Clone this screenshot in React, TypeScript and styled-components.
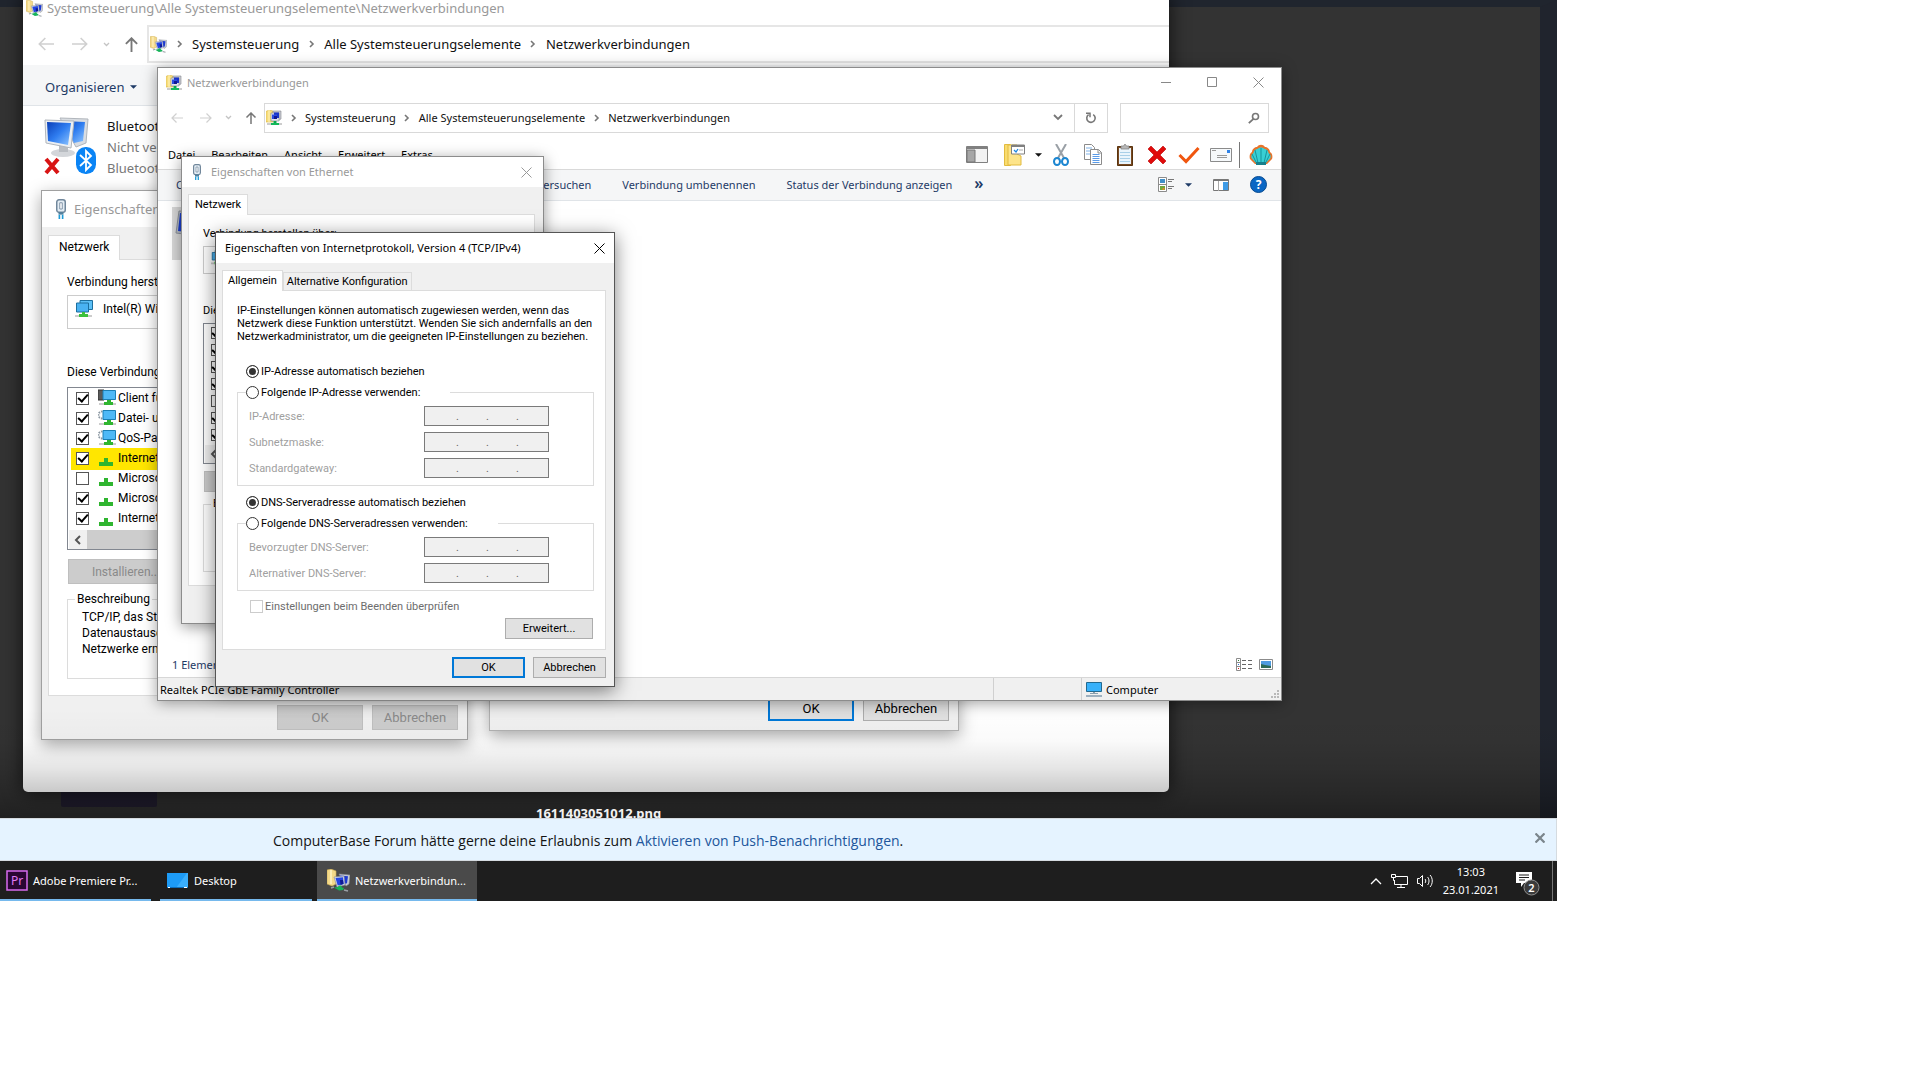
import React from "react";
import styled, { createGlobalStyle, css, ThemeProvider } from "styled-components";

const ui = `"Noto Sans", "Open Sans", sans-serif`;
const dlg = `Roboto, "Noto Sans", sans-serif`;

const Global = createGlobalStyle`
  * { box-sizing: border-box; }
  body { margin: 0; background: #fff; font-family: ${ui}; font-size: 11px; color: #000; }
  button, input { font: inherit; color: inherit; }
  button { padding: 0; border: 0; background: none; }
  p { margin: 0; }
  svg { display: block; flex: none; }
`;

/* ---------- shell ---------- */
const Screen = styled.main`
  display: flex;
  flex-direction: column;
  width: 100%;
  max-width: 1557px;
  overflow: hidden;
`;
const Desktop = styled.section`
  position: relative;
  height: 818px;
  overflow: hidden;
  background: #333;
`;
const Backdrop = styled.div`
  position: absolute;
  inset: 0;
  border-top: 7px solid #20252e;
  border-right: 17px solid #20242d;
`;
const Shade = styled.div`
  position: absolute;
  inset: auto 0 0 0;
  height: 110px;
  background: linear-gradient(rgba(0, 0, 0, 0), rgba(0, 0, 0, 0.02) 30%, rgba(0, 0, 0, 0.1) 55%, rgba(0, 0, 0, 0.22) 78%, rgba(0, 0, 0, 0.36));
`;
const Thumb = styled.div`
  position: absolute;
  left: 61px;
  top: 780px;
  width: 96px;
  height: 27px;
  border-radius: 2px;
  background: #242033;
`;
const FileName = styled.p`
  position: absolute;
  left: 536px;
  top: 803px;
  font: 700 13px/20px ${ui};
  color: #f2f2f2;
`;
const Win = styled.section<{ $x: number; $y: number; $w: number; $h: number; $edge: string; $shadow: string; $bg?: string }>`
  position: absolute;
  left: ${(p) => p.$x}px;
  top: ${(p) => p.$y}px;
  width: ${(p) => p.$w}px;
  height: ${(p) => p.$h}px;
  display: flex;
  flex-direction: column;
  border: 1px solid ${(p) => p.$edge};
  background: ${(p) => p.$bg || "#fff"};
  box-shadow: ${(p) => p.$shadow};
  white-space: nowrap;
`;
const PhotoWin = styled(Win)`
  border: 0;
  border-radius: 0 0 5px 5px;
  overflow: hidden;
`;

/* ---------- explorer ---------- */
const TitleRow = styled.header<{ $h: number; $px?: number; $gap?: number; $size?: number; $color?: string }>`
  display: flex;
  align-items: center;
  flex: none;
  gap: ${(p) => p.$gap ?? 5}px;
  height: ${(p) => p.$h}px;
  padding: 0 ${(p) => p.$px ?? 7}px;
  background: #fff;
  color: ${(p) => p.$color || "#999"};
  font-size: ${(p) => p.$size || 11}px;
`;
const Caption = styled.h2`
  flex: 1;
  margin: 0;
  padding-bottom: 1px;
  font: inherit;
  font-weight: 400;
`;
const CaptionButtons = styled.div`
  display: flex;
  gap: 35px;
  padding-right: 9px;
`;
const NavRow = styled.nav<{ $h: number }>`
  display: flex;
  align-items: center;
  flex: none;
  height: ${(p) => p.$h}px;
`;
const Arrows = styled.div<{ $w: number; $l: number; $r: number }>`
  display: flex;
  align-items: center;
  justify-content: space-between;
  width: ${(p) => p.$w}px;
  padding: 0 ${(p) => p.$r}px 0 ${(p) => p.$l}px;
  & > :nth-child(2) { margin-left: 4px; }
`;
const Address = styled.div<{ $h: number; $size: number; $open?: boolean }>`
  display: flex;
  align-items: center;
  flex: 1;
  height: ${(p) => p.$h}px;
  padding-left: 1px;
  border: 1px solid #d9d9d9;
  ${(p) => p.$open && css`border-right: 0; border-width: 2px 0 2px 2px; border-color: #e6e6e6;`}
  font-size: ${(p) => p.$size}px;
`;
const Sep = styled.span<{ $w: number }>`
  display: flex;
  justify-content: center;
  width: ${(p) => p.$w}px;
`;
const Crumb = styled.a`
  color: #111;
  text-decoration: none;
`;
const AddressEnd = styled.div`
  display: flex;
  align-self: stretch;
  align-items: center;
  margin-left: auto;
`;
const IconCell = styled.button<{ $w: number; $line?: boolean }>`
  display: flex;
  align-items: center;
  justify-content: center;
  align-self: stretch;
  width: ${(p) => p.$w}px;
  ${(p) => p.$line && css`border-left: 1px solid #d9d9d9;`}
`;
const Search = styled.label`
  display: flex;
  align-items: center;
  width: 149px;
  height: 30px;
  margin: 0 12px;
  padding-right: 8px;
  border: 1px solid #d9d9d9;
`;
const SearchInput = styled.input`
  flex: 1;
  min-width: 0;
  border: 0;
  outline: 0;
  background: none;
`;
const MenuRow = styled.div`
  display: flex;
  align-items: center;
  flex: none;
  height: 31px;
  padding: 2px 8px 0 10px;
`;
const Menus = styled.div`
  display: flex;
  flex: 1;
  gap: 16px;
`;
const Tools = styled.div`
  display: flex;
  align-items: center;
`;
const ToolCell = styled.button`
  display: grid;
  place-items: center;
  width: 32px;
  height: 26px;
`;
const Divider = styled.span`
  width: 1px;
  height: 26px;
  margin: 0 9px 0 2px;
  background: #777;
`;
const CommandBar = styled.div<{ $h: number; $size?: number }>`
  display: flex;
  align-items: center;
  flex: none;
  gap: 31px;
  height: ${(p) => p.$h}px;
  padding: 3px 14px 0 22px;
  border-bottom: 1px solid #e0e4e8;
  background: #f5f6f7;
  color: #1e3a66;
  font-size: ${(p) => p.$size || 11}px;
`;
const MainCommands = styled(CommandBar)`
  border-top: 1px solid #d9d9d9;
  padding: 0 14px 1px 18px;
`;
const More = styled.button`
  margin: -4px 0 0 -9px;
  font-size: 16px;
  font-weight: 600;
`;
const CommandEnd = styled.div`
  display: flex;
  align-items: center;
  gap: 21px;
  margin-left: auto;
`;
const CaretButton = styled.button<{ $gap?: number }>`
  display: flex;
  align-items: center;
  gap: ${(p) => p.$gap ?? 7}px;
`;
const FolderButton = styled(CaretButton)`
  margin: 0 3px 0 16px;
`;
const Files = styled.div`
  flex: 1;
  padding: 6px 14px;
`;
const SelectedTile = styled.div`
  display: flex;
  width: 260px;
  height: 53px;
  padding: 2px;
  background: #d9d9d9;
`;
const Details = styled.div`
  display: flex;
  align-items: center;
  flex: none;
  gap: 7px;
  height: 24px;
  padding: 0 8px 2px 14px;
  color: #1e3a66;
`;
const Count = styled.span`
  flex: 1;
`;
const StatusBar = styled.footer`
  display: flex;
  flex: none;
  height: 23px;
  border-top: 1px solid #d7d7d7;
  background: #f0f0f0;
`;
const StatusCell = styled.span<{ $w?: number }>`
  display: flex;
  align-items: center;
  gap: 4px;
  ${(p) => (p.$w ? css`width: ${p.$w}px; border-left: 1px solid #d0d0d0;` : css`flex: 1;`)}
  padding: 0 2px 0 ${(p) => (p.$w ? 4 : 2)}px;
`;
const Grip = styled.span`
  display: flex;
  align-self: flex-end;
  margin: 0 0 2px auto;
`;
const Connection = styled.article`
  display: flex;
  gap: 9px;
  padding: 9px 21px;
`;
const ConnIcon = styled.span`
  padding-top: 2px;
`;
const ConnText = styled.p`
  padding-top: 1px;
  font-size: 13px;
  line-height: 21px;
  color: #777;
`;
const ConnName = styled.strong`
  display: block;
  font-weight: 400;
  color: #111;
`;

/* ---------- dialogs ---------- */
const DialogBody = styled.div<{ $pt?: number }>`
  display: flex;
  flex-direction: column;
  flex: 1;
  padding: ${(p) => p.$pt ?? 7}px 8px 0 6px;
  background: #f0f0f0;
  font-family: ${dlg};
`;
const Tabs = styled.div<{ $h: number }>`
  display: flex;
  align-items: flex-end;
  height: ${(p) => p.$h}px;
`;
const Tab = styled.button<{ $on?: boolean; $px: number; $h: number; $size?: number }>`
  height: ${(p) => p.$h}px;
  padding: 0 ${(p) => p.$px}px;
  border: 1px solid #dcdcdc;
  border-bottom: 0;
  background: #f0f0f0;
  font-size: ${(p) => p.$size ?? 11}px;
  ${(p) => p.$on && css`
    position: relative;
    z-index: 1;
    margin-bottom: -1px;
    padding-bottom: 2px;
    background: #fff;
  `}
`;
const Panel = styled.div<{ $pad: string }>`
  display: flex;
  flex-direction: column;
  padding: ${(p) => p.$pad};
  border: 1px solid #dcdcdc;
  background: #fff;
`;
const Footer = styled.footer<{ $gap: number; $pt: number; $size?: number }>`
  display: flex;
  justify-content: flex-end;
  gap: ${(p) => p.$gap}px;
  padding: ${(p) => p.$pt}px 1px 0 0;
  font-size: ${(p) => p.$size ?? 11}px;
`;
const TightFooter = styled(Footer)`
  padding-right: 0;
`;
const Push = styled.button<{ $w: number; $h: number; $main?: boolean }>`
  width: ${(p) => p.$w}px;
  height: ${(p) => p.$h}px;
  border: ${(p) => (p.$main ? "2px solid #0078d7" : "1px solid #adadad")};
  background: #e1e1e1;
  &:disabled {
    border-color: #bfbfbf;
    background: #ccc;
    color: #8a8a8a;
  }
`;
const Intro = styled.p`
  line-height: 13px;
  white-space: pre-line;
`;
const RadioLabel = styled.label`
  display: flex;
  align-items: center;
  gap: 2px;
  height: 20px;
`;
const SoloRadio = styled(RadioLabel)<{ $mt: number }>`
  margin: ${(p) => p.$mt}px 0 1px 9px;
`;
const Radio = styled.input.attrs({ type: "radio" })`
  appearance: none;
  width: 13px;
  height: 13px;
  margin: 0;
  border: 1px solid #333;
  border-radius: 50%;
  background: #fff;
  &:checked {
    background: #333;
    box-shadow: inset 0 0 0 2px #fff;
  }
`;
const Check = styled.input.attrs({ type: "checkbox" })<{ $s?: number }>`
  appearance: none;
  flex: none;
  display: grid;
  place-items: center;
  width: ${(p) => p.$s ?? 13}px;
  height: ${(p) => p.$s ?? 13}px;
  margin: 0;
  border: 1px solid #555;
  background: #fff;
  &:disabled { border-color: #ccc; }
  &:checked::after {
    content: "";
    width: 4px;
    height: 8px;
    margin-top: -2px;
    border: solid #000;
    border-width: 0 2px 2px 0;
    transform: rotate(42deg);
  }
`;
const IpGroup = styled.fieldset`
  display: grid;
  gap: 6px;
  min-width: 0;
  margin: 0;
  padding: 4px 11px 7px;
  border: 1px solid #dcdcdc;
`;
const IpLegend = styled.legend<{ $w: number }>`
  width: ${(p) => p.$w}px;
  margin-left: -3px;
  padding: 0;
`;
const IpRow = styled.div`
  display: grid;
  grid-template-columns: 175px 125px;
  align-items: center;
  height: 20px;
  color: #a0a0a0;
`;
const IpBox = styled.span`
  display: flex;
  align-items: center;
  height: 20px;
  padding: 0 2px 0 4px;
  border: 1px solid #7a7a7a;
  background: #f0f0f0;
  color: #666;
`;
const Octet = styled.input`
  flex: 1;
  min-width: 0;
  width: 0;
  height: 14px;
  padding: 0;
  border: 0;
  background: none;
`;
const Dot = styled.span`
  width: 3px;
`;
const Verify = styled.label`
  display: flex;
  align-items: center;
  gap: 2px;
  height: 16px;
  margin: 7px 0 4px 13px;
  color: #6d6d6d;
`;
const Advanced = styled(Push)`
  align-self: flex-end;
  margin-right: 1px;
`;

/* properties dialog: every measure comes from the theme so that both sizes share one layout */
type Metrics = {
  font: number; line: number; titleFont: number; title: number; titlePad: number; titleGap: number; plug: number; bodyTop: number; tab: number;
  tabPx: number; panelH: number; panelTop: number; panelSide: number; adapter: number; gap: number; listTop: number; row: number;
  rowPad: number; check: number; icon: number; scroll: number; btnTop: number; btnW: number; btnH: number; groupTop: number; groupH: number;
};
const small: Metrics = {
  font: 11, line: 16, titleFont: 11, title: 30, titlePad: 11, titleGap: 10, plug: 8, bodyTop: 7, tab: 20, tabPx: 6, panelH: 372, panelTop: 11,
  panelSide: 14, adapter: 28, gap: 29, listTop: 4, row: 17, rowPad: 7, check: 12, icon: 15, scroll: 18, btnTop: 7, btnW: 98, btnH: 21,
  groupTop: 4, groupH: 76,
};
const large: Metrics = {
  font: 12, line: 18, titleFont: 13, title: 36, titlePad: 14, titleGap: 8, plug: 10, bodyTop: 8, tab: 24, tabPx: 10, panelH: 437, panelTop: 13,
  panelSide: 18, adapter: 34, gap: 34, listTop: 6, row: 20, rowPad: 8, check: 13, icon: 18, scroll: 19, btnTop: 9, btnW: 116, btnH: 25,
  groupTop: 6, groupH: 89,
};
const m = (k: keyof Metrics) => (p: { theme: unknown }) => `${(p.theme as Metrics)[k]}px`;

const PropPanel = styled(Panel)`
  height: ${m("panelH")};
  font-size: ${m("font")};
`;
const Label = styled.p`
  line-height: ${m("line")};
`;
const Adapter = styled.div`
  display: flex;
  align-items: center;
  gap: 10px;
  height: ${m("adapter")};
  margin: 4px 0 ${m("gap")};
  padding: 0 7px 6px;
  border: 1px solid #ccc;
`;
const List = styled.div`
  margin-top: ${m("listTop")};
  border: 1px solid #828790;
`;
const Item = styled.label<{ $hot?: boolean }>`
  display: flex;
  align-items: center;
  gap: 2px;
  height: ${m("row")};
  padding-left: ${m("rowPad")};
  ${(p) => p.$hot && css`
    margin-left: 3px;
    padding-left: 5px;
    background: #ffe600;
    box-shadow: 0 2px #ffe600;
  `}
`;
const ItemIcon = styled.span`
  display: flex;
  padding-left: 7px;
`;
const Scroll = styled.div`
  display: flex;
  align-items: center;
  gap: 6px;
  height: ${m("scroll")};
  margin: 2px 1px 0;
  padding-left: 5px;
  background: #f0f0f0;
  color: #555;
`;
const ScrollThumb = styled.span`
  align-self: stretch;
  flex: 1;
  margin-right: 60px;
  background: #cdcdcd;
`;
const Install = styled(Push)`
  flex: none;
  margin: ${m("btnTop")} 0 ${m("groupTop")} 1px;
`;
const Describe = styled.fieldset`
  height: ${m("groupH")};
  min-width: 0;
  margin: 0;
  padding: 1px 14px;
  border: 1px solid #dcdcdc;
  line-height: 16px;
  white-space: pre;
`;
const DescribeLegend = styled.legend`
  margin-left: -7px;
  padding: 0 2px;
  line-height: ${m("line")};
`;

/* ---------- push notice + taskbar ---------- */
const Notice = styled.aside`
  display: flex;
  align-items: center;
  height: 43px;
  padding: 1px 11px 0 273px;
  border: 1px solid #d5dbe0;
  border-left: 0;
  background: #e5f3ff;
  font-family: "Open Sans", "Noto Sans", sans-serif;
  font-size: 14px;
  color: #141414;
`;
const NoticeText = styled.p`
  flex: 1;
`;
const NoticeLink = styled.a`
  color: #21569c;
  text-decoration: none;
`;
const NoticeClose = styled.button`
  display: flex;
  padding-bottom: 4px;
`;
const Taskbar = styled.footer`
  display: flex;
  height: 40px;
  background: #1e1e1e;
  color: #fff;
  font-size: 11px;
`;
const Task = styled.button<{ $w: number; $l: number; $mr: number; $on?: boolean; $gap?: number }>`
  display: flex;
  align-items: center;
  gap: ${(p) => p.$gap ?? 6}px;
  width: ${(p) => p.$w}px;
  margin-right: ${(p) => p.$mr}px;
  padding: 0 0 0 ${(p) => p.$l}px;
  border-bottom: 2px solid #76b9ed;
  background: ${(p) => (p.$on ? "#4a4a4a" : "none")};
  white-space: nowrap;
`;
const Tray = styled.div`
  display: flex;
  align-items: center;
  gap: 9px;
  margin-left: auto;
`;
const Clock = styled.time`
  line-height: 18px;
  text-align: center;
  font-size: 11px;
`;
const Bell = styled.button`
  display: flex;
  margin: 4px 11px 0 7px;
`;
const Peek = styled.span`
  align-self: stretch;
  width: 5px;
  margin-left: -9px;
  border-left: 1px solid #777;
`;

/* ---------- drawings ---------- */
const Stroke = ({ d, w, h, c = "#808080", sw = 1.2 }: { d: string; w: number; h: number; c?: string; sw?: number }) => (
  <svg width={w} height={h} viewBox={`0 0 ${w} ${h}`} fill="none" stroke={c} strokeWidth={sw}><path d={d} /></svg>
);
const Back = ({ s = 12 }) => (<svg width={s} height={s} viewBox="0 0 12 12" fill="none" stroke="#d0d0d0" strokeWidth="1.2"><path d="M12 6H1M5.5 1.5 1 6l4.500 4.500" /></svg>);
const Forward = ({ s = 12 }) => (<svg width={s} height={s} viewBox="0 0 12 12" fill="none" stroke="#d0d0d0" strokeWidth="1.2"><path d="M0 6h11M6.500 1.500 11 6 6.500 10.500" /></svg>);
const Up = ({ s = 12, c = "#777" }) => (<svg width={s} height={s} viewBox="0 0 12 12" fill="none" stroke={c} strokeWidth="1.500"><path d="M6 12V1M1.500 5.500 6 1l4.500 4.500" /></svg>);
const Recent = () => <Stroke w={7} h={5} d="M1 1l2.500 2.500L6 1" c="#c4c4c4" sw={1.3} />;
const Chevron = () => <Stroke w={6} h={8} d="M1 1l3 3-3 3" c="#777" sw={1.6} />;
const ArrowLeft = () => <Stroke w={7} h={10} d="M6 1 2 5l4 4" c="#555" sw={2} />;
const Cross = ({ c = "#999", s = 11, w = 1 }) => (<svg width={s} height={s} viewBox="0 0 11 11" stroke={c} strokeWidth={w}><path d="M.5.5l10 10M10.500.5l-10 10" /></svg>);
const Caret = ({ c = "#1e3a66" }) => (<svg width="7" height="4" viewBox="0 0 8 4"><path d="M0 0h8L4 4z" fill={c} /></svg>);
const NetFolder = ({ s = 16 }) => (
  <svg width={s} height={s} viewBox="0 0 16 16">
    <path d="M0 1.500 3 0l4 1v11H0z" fill="#f7dd7c" stroke="#d6b23e" strokeWidth=".6" />
    <path d="M3 0v12" stroke="#fff3bd" />
    <path d="M7 1h8v8l-2 1H7z" fill="#c9cbd2" stroke="#85878f" strokeWidth=".6" />
    <path d="M5 3h8v8H5z" fill="#dfe2ea" stroke="#85878f" strokeWidth=".6" />
    <path d="M8 2.500h5V8H8z" fill="#1733c9" />
    <path d="M6 4.500h5V9H6z" fill="#2a4be0" /><path d="M8 6h3v3H8z" fill="#10188f" />
    <path d="M7.500 11h3v2h-3z" fill="#0aa64c" /><path d="M5 13h8v2H5z" fill="#13b95a" />
    <path d="M1 14h4M13 14h3" stroke="#9a9a9a" />
  </svg>
);
const NetFolderTilted = ({ s = 17 }) => (
  <svg width={s} height={s} viewBox="0 0 23 23">
    <path d="M0 1l4-1 5 2v13l-4 2-5-2z" fill="#f3d98a" stroke="#c9a94e" strokeWidth=".6" />
    <path d="M4 1v14" stroke="#fff3c4" strokeWidth="1.500" />
    <path d="M12 5l11 1-1 9-3 2z" fill="#c8ccd6" stroke="#868b95" strokeWidth=".6" />
    <path d="M13 6.500l8 .7-1 7-4 1z" fill="#1c39d2" />
    <path d="M7 8l10-1 1 9-8 2z" fill="#d9dde6" stroke="#868b95" strokeWidth=".6" />
    <path d="M8.500 9l7.500-.8.700 6.800-6 1.500z" fill="#2446e4" /><path d="M13 11l3 0 .5 4-3 1z" fill="#0e1a94" />
    <path d="M4 19l3-1M17 21l4 1" stroke="#9aa0a6" strokeWidth="1.500" />
    <path d="M7 18.500l4-.5 1-1.500h2l1 2 2 .5-1 2-4 .5z" fill="#17b35a" />
  </svg>
);
const Plug = ({ s = 8 }) => (
  <svg width={s} height={s * 2} viewBox="0 0 8 16">
    <rect x=".6" y=".6" width="6.800" height="10" rx="1.800" fill="#e4edf4" stroke="#71879b" strokeWidth="1.200" />
    <path d="M3 3h2v5H3z" fill="#fff" stroke="#71879b" strokeWidth=".7" />
    <path d="M2 10.500h4v2H2z" fill="#53809d" /><path d="M2.700 12.500V16M5.300 12.500V16" stroke="#1d9bd7" strokeWidth="1.300" />
  </svg>
);
const NicIcon = ({ s = 18 }) => (
  <svg width={s} height={s} viewBox="0 0 18 18">
    <path d="M5 .5h12.500v9H5z" fill="#5cc0f7" stroke="#1c6f9f" /><path d="M1.500 3h12v9h-12z" fill="#49b2f2" stroke="#1c6f9f" />
    <path d="M7 12h3v2h3v3H4v-3h3z" fill="#3cc13c" /><path d="M0 15h4v2H0zM13 15h4v2h-4z" fill="#ccc" />
  </svg>
);
const ServiceIcon = ({ s = 18, kind }: { s?: number; kind: "client" | "gear" | "proto" }) => (
  <svg width={s} height={s} viewBox="0 0 18 18">
    {kind === "client" && <path d="M0 1h6v10H0z" fill="#5a5a5a" stroke="#333" />}
    {kind === "gear" && <circle cx="4" cy="6" r="3.500" fill="none" stroke="#8b97a1" strokeWidth="2" strokeDasharray="1.500 1" />}
    {kind !== "proto" && <path d="M5 1.500h12.500v9H5z" fill="#4fb9f7" stroke="#1c7fb5" />}
    <path d={kind === "proto" ? "M6 9h4v4h5v4H1v-4h5z" : "M9 11h4v2h2v3H6v-3h3z"} fill="#2fb52f" />
    {kind !== "proto" && <path d="M1 14h5v2H1zM15 14h3v2h-3z" fill="#ccc" />}
  </svg>
);
const BluetoothPcs = () => (
  <svg width="54" height="58" viewBox="0 0 54 58">
    <defs><linearGradient id="scr" x1="0" y1="0" x2="1" y2="1"><stop stopColor="#0b3fb8" /><stop offset=".5" stopColor="#2f7df0" /><stop offset="1" stopColor="#8ec5ff" /></linearGradient></defs>
    <path d="M16 1 44 2 42 26 32 30z" fill="#d9dde2" stroke="#b1b6bc" /><path d="M19 4l22 1-2 19-9 2z" fill="url(#scr)" />
    <ellipse cx="19" cy="36" rx="12" ry="4" fill="#d3d6da" /><path d="M15 27h9v8h-9z" fill="#b9bdc2" />
    <path d="M1 3l29 1-3 27L2 26z" fill="#eceff2" stroke="#b1b6bc" /><path d="M3 5l24 1-3 22L4 24z" fill="url(#scr)" />
    <path d="M2 42l12 14M14 42 2 56" stroke="#d81414" strokeWidth="4" />
    <rect x="32" y="30" width="20" height="27" rx="9.500" fill="#0a84f5" />
    <path d="M36 38l11 10-5 5V34l5 5-11 10" fill="none" stroke="#fff" strokeWidth="1.800" />
  </svg>
);
const TilePc = () => (
  <svg width="40" height="34" viewBox="0 0 40 34">
    <path d="M5 2l31 2-3 24-31-4z" fill="#b9bec6" stroke="#8d939c" />
    <path d="M6 4l27 2-3 19-26-3z" fill="#1c3fd0" />
  </svg>
);
const PaneIcon = () => (
  <svg width="22" height="17" viewBox="0 0 22 17"><path d="M.5.5h21v16H.5z" fill="#f2f2f2" stroke="#808080" /><path d="M1 1h20v2H1z" fill="#808080" /><path d="M1 4h8v12H1z" fill="#a6a6a6" stroke="#777" /></svg>
);
const FolderOpts = () => (
  <svg width="21" height="22" viewBox="0 0 21 22"><path d="M.5.5h6v21h-6z" fill="#f9dc6e" stroke="#e2bb3f" /><path d="M4 1h9v9l4 2v9H4z" fill="#fde48a" stroke="#e2bb3f" /><path d="M7.500 1h13v9h-13z" fill="#fff" stroke="#808080" /><path d="M8 2h12" stroke="#808080" strokeWidth="2" /><path d="M10 6l2 2 2-3" fill="none" stroke="#1c86e0" strokeWidth="1.300" /><path d="M15 6h4" stroke="#aaa" /></svg>
);
const CutIcon = () => (
  <svg width="16" height="22" viewBox="0 0 16 22" fill="none"><path d="M3 0l8 14M13 0 5 14" stroke="#9aa0a6" strokeWidth="2" /><ellipse cx="4" cy="17.500" rx="3" ry="3.500" stroke="#1c86d1" strokeWidth="2" /><ellipse cx="12" cy="17.500" rx="3" ry="3.500" stroke="#1c86d1" strokeWidth="2" /></svg>
);
const CopyIcon = () => (
  <svg width="18" height="22" viewBox="0 0 18 22"><path d="M.5.5h7l3 3v12H.5z" fill="#fff" stroke="#8b8b8b" /><path d="M2 4h6M2 7h6M2 10h6" stroke="#7fb2e8" /><path d="M6.500 5.500h8l3 3v12h-11z" fill="#fff" stroke="#8b8b8b" /><path d="M14 5.500v3.500h3.500" fill="none" stroke="#8b8b8b" /><path d="M8.500 10.500h7M8.500 12.500h7M8.500 14.500h7M8.500 16.500h7M8.500 18.500h7" stroke="#5a9be8" /></svg>
);
const PasteIcon = () => (
  <svg width="16" height="22" viewBox="0 0 16 22"><path d="M.5 2.500h15v19H.5z" fill="#7a4a22" stroke="#59340f" /><path d="M2 4h12v16H2z" fill="#eaf5fc" /><path d="M3 8.500h10M3 11.500h10M3 14.500h10M3 17.500h10" stroke="#a9d0e8" /><path d="M4 2h2.500l1.500-2 1.500 2H12v3H4z" fill="#b7b7b7" stroke="#7d7d7d" strokeWidth=".7" /></svg>
);
const DeleteIcon = () => (<svg width="20" height="20" viewBox="0 0 20 20"><path d="M4 1l6 6 6-6 3 3-6 6 6 6-3 3-6-6-6 6-3-3 6-6-6-6z" fill="#e00b0b" stroke="#b80000" strokeWidth=".6" /></svg>);
const TickIcon = () => (<svg width="22" height="18" viewBox="0 0 22 18"><path d="M1.500 9l6.500 6.500L20.500 2" fill="none" stroke="#f0560f" strokeWidth="3" /></svg>);
const MailIcon = () => (<svg width="22" height="14" viewBox="0 0 22 14"><path d="M.5.5h21v13H.5z" fill="#f6f9fb" stroke="#8b8b8b" /><path d="M17 2h3v3h-3z" fill="#2f82e6" /><path d="M2 2.500h4M7 7.500h10M7 9.500h10" stroke="#999" /></svg>);
const ShellIcon = () => (
  <svg width="24" height="22" viewBox="0 0 24 22"><path d="M6 20 1 15c-1-3 0-6 2-7 0-3 3-5 5-5 2-3 6-3 8 0 2 0 5 2 5 5 2 1 3 4 2 7l-5 5z" fill="#e8732a" /><path d="M7 19 2.500 14c-.5-2 0-4 2-5 0-2 2-4 4-4 2-2 5-2 7 0 2 0 4 2 4 4 2 1 2.500 3 2 5L17 19c-2 1.500-8 1.500-10 0z" fill="#38cfd4" /><path d="M12 19V4M9 19 6 6M15 19l3-13M7.500 19 3 10M16.500 19 21 10" stroke="#138c96" strokeWidth=".9" /><path d="M7 18h10v3H7z" fill="#18808c" /></svg>
);
const ViewIcon = () => (<svg width="16" height="15" viewBox="0 0 16 15"><path d="M.5.5h8v14h-8zM.5 7.500h8" fill="#fff" stroke="#8b8b8b" /><path d="M2 2h5v4H2z" fill="#3f8fc9" /><path d="M2 9h5v4H2z" fill="#73a83b" /><path d="M4.500 11h2v2h-2z" fill="#e08a2c" /><path d="M10 2.500h6M10 4.500h4M10 9.500h6M10 11.500h4" stroke="#777" /></svg>);
const PreviewIcon = () => (<svg width="16" height="12" viewBox="0 0 16 12"><path d="M.5.5h15v11H.5z" fill="#fff" stroke="#777" /><path d="M1 1.500h14" stroke="#777" /><path d="M5.500 2v10" stroke="#aaa" /><path d="M10 3h5v8h-5z" fill="#3f9be6" /></svg>);
const RefreshIcon = () => (<svg width="12" height="12" viewBox="0 0 12 12" fill="none" stroke="#777"><path d="M8.200 2.600A4.200 4.200 0 1 1 3.600 2.700" strokeWidth="1.600" /><path d="M1 1.200h4v4" strokeWidth="1.500" /></svg>);
const LensIcon = () => (<svg width="12" height="12" viewBox="0 0 12 12" fill="none" stroke="#777"><circle cx="7.500" cy="4.500" r="3" strokeWidth="1.600" /><path d="M5.500 6.800.8 11.200" strokeWidth="1.800" /></svg>);
const DetailsIcon = () => (<svg width="16" height="13" viewBox="0 0 16 13"><path d="M.5.5h4v12h-4zM.5 4.500h4M.5 8.500h4" fill="#fff" stroke="#8b8b8b" /><path d="M2 2h1v1H2z" fill="#2c7a35" /><path d="M2 6h1v1H2z" fill="#2a6fe0" /><path d="M2 10h1v1H2z" fill="#d21c1c" /><path d="M6 2.500h4M12 2.500h4M6 6.500h4M12 6.500h4M6 10.500h4M12 10.500h4" stroke="#666" /></svg>);
const LargeIcon = () => (<svg width="14" height="11" viewBox="0 0 14 11"><path d="M.5.5h13v10H.5z" fill="#fff" stroke="#8b8b8b" /><path d="M2 2h10v7H2z" fill="#4f9be0" /><path d="M2 5l4 1 6 1v2H2z" fill="#2d6a55" /></svg>);
const ComputerIcon = () => (<svg width="16" height="15" viewBox="0 0 16 15"><path d="M.5.5h15v9H.5z" fill="#38b1fa" stroke="#22698f" /><path d="M7 10h2v1H7zM4 11h8v1H4z" fill="#8aa0af" /><path d="M0 13h16v2H0z" fill="#9db0bf" /></svg>);
const HelpIcon = () => (<svg width="17" height="17" viewBox="0 0 17 17"><circle cx="8.500" cy="8.500" r="8" fill="#0a67c4" stroke="#084b90" /><text x="8.500" y="12.500" textAnchor="middle" fontFamily="Noto Sans, sans-serif" fontWeight="700" fontSize="12" fill="#fff">?</text></svg>);
const PrIcon = () => (<svg width="22" height="21" viewBox="0 0 22 21"><path d="M1 1h20v19H1z" fill="#2a0634" stroke="#d86bf0" strokeWidth="1.500" /><text x="11" y="15" textAnchor="middle" fontFamily="Noto Sans, sans-serif" fontSize="12" fill="#e07bf5">Pr</text></svg>);
const DesktopIcon = () => (<svg width="21" height="15" viewBox="0 0 21 15"><path d="M0 0h21v15H0z" fill="#1d9bf6" /><path d="M9 15 20 0h1v15z" fill="#3aaefc" /><path d="M0 14.500h21" stroke="#0d6cb8" /><path d="M1 14.500h2M17 14.500h3" stroke="#fff" /></svg>);
const NetTray = () => (<svg width="17" height="14" viewBox="0 0 17 14" fill="none" stroke="#fff"><path d="M5 2.500h11.500v8H3.500V6M10 10.500v3M6 13.500h8M.5.500h4v3h-4zM2.500 3.500v3h1" /></svg>);
const Speaker = () => (<svg width="17" height="14" viewBox="0 0 17 14" fill="none" stroke="#fff"><path d="M.5 4.500h2l3-3v11l-3-3h-2zM8 5c1 1 1 3 0 4M10.500 3c2 2 2 6 0 8M13 1c3 3 3 9 0 12" /></svg>);
const BellIcon = () => (<svg width="26" height="26" viewBox="0 0 26 26"><path d="M1 2h16v11h-8l-3 4v-4H1z" fill="#fff" /><path d="M4 5h10M4 7.500h10M4 10h6" stroke="#1e1e1e" /><circle cx="16.500" cy="17.500" r="7.500" fill="#3b3b3b" stroke="#8f8f8f" /><text x="16.500" y="21.500" textAnchor="middle" fontFamily="Noto Sans, sans-serif" fontWeight="600" fontSize="11" fill="#fff">2</text></svg>);
const GripIcon = () => (<svg width="8" height="8" viewBox="0 0 8 8" fill="#b8b8b8"><path d="M6 0h2v2H6zM6 3h2v2H6zM6 6h2v2H6zM3 3h2v2H3zM3 6h2v2H3zM0 6h2v2H0z" /></svg>);

/* ---------- parts ---------- */
const crumbs = ["Systemsteuerung", "Alle Systemsteuerungselemente", "Netzwerkverbindungen"];
const Crumbs = ({ w }: { w: number }) => (
  <>
    {crumbs.map((c) => (
      <React.Fragment key={c}>
        <Sep $w={w}><Chevron /></Sep>
        <Crumb href="#">{c}</Crumb>
      </React.Fragment>
    ))}
  </>
);

type Service = { name: string; kind: "client" | "gear" | "proto"; on: boolean; hot?: boolean };
const services: Service[] = [
  { name: "Client für Microsoft-Netzwerke", kind: "client", on: true },
  { name: "Datei- und Druckerfreigabe", kind: "gear", on: true },
  { name: "QoS-Paketplaner", kind: "gear", on: true },
  { name: "Internetprotokoll, Version 4", kind: "proto", on: true, hot: true },
  { name: "Microsoft-Multiplexorprotokoll", kind: "proto", on: false },
  { name: "Microsoft-LLDP-Treiber", kind: "proto", on: true },
  { name: "Internetprotokoll, Version 6", kind: "proto", on: true },
];

function Properties({ metrics, title, adapter, mark }: { metrics: Metrics; title: string; adapter: string; mark?: boolean }) {
  return (
    <ThemeProvider theme={metrics}>
      <TitleRow $h={metrics.title} $px={metrics.titlePad} $gap={metrics.titleGap} $size={metrics.titleFont}>
        <Plug s={metrics.plug} />
        <Caption>{title}</Caption>
        <button aria-label="Schließen"><Cross /></button>
      </TitleRow>
      <DialogBody $pt={metrics.bodyTop}>
        <Tabs $h={metrics.tab}>
          <Tab $on $px={metrics.tabPx} $h={metrics.tab + 1} $size={metrics.font}>Netzwerk</Tab>
        </Tabs>
        <PropPanel $pad={`${metrics.panelTop}px ${metrics.panelSide}px 0`}>
          <Label>Verbindung herstellen über:</Label>
          <Adapter><NicIcon s={metrics.icon} />{adapter}</Adapter>
          <Label>Diese Verbindung verwendet folgende Elemente:</Label>
          <List>
            {services.map((s) => (
              <Item key={s.name} $hot={mark && s.hot}>
                <Check $s={metrics.check} defaultChecked={s.on} />
                <ItemIcon><ServiceIcon s={metrics.icon} kind={s.kind} /></ItemIcon>
                {s.name}
              </Item>
            ))}
            <Scroll><ArrowLeft /><ScrollThumb /></Scroll>
          </List>
          <Install disabled $w={metrics.btnW} $h={metrics.btnH}>Installieren...</Install>
          <Describe>
            <DescribeLegend>Beschreibung</DescribeLegend>
            {"TCP/IP, das Standardprotokoll für WAN-Netzwerke, das den\nDatenaustausch über verschiedene, miteinander\nNetzwerke ermöglicht."}
          </Describe>
        </PropPanel>
        {mark && (
          <Footer $gap={9} $pt={9} $size={13}>
            <Push disabled $w={86} $h={25}>OK</Push>
            <Push disabled $w={86} $h={25}>Abbrechen</Push>
          </Footer>
        )}
      </DialogBody>
    </ThemeProvider>
  );
}

function IpField({ label }: { label: string }) {
  return (
    <IpRow role="group" aria-label={label}>
      <span>{label}</span>
      <IpBox>
        {[1, 2, 3, 4].map((n) => (
          <React.Fragment key={n}>
            {n > 1 && <Dot>.</Dot>}
            <Octet disabled aria-label={`${label} ${n}`} />
          </React.Fragment>
        ))}
      </IpBox>
    </IpRow>
  );
}

const soft = "0 5px 16px rgba(0,0,0,.35)";
const BigFooter = styled(Footer)`
  margin-top: auto;
  padding: 0 1px 9px 0;
`;

export default function App() {
  return (
    <Screen>
      <Global />
      <Desktop>
        <Backdrop />
        <Thumb />
        <PhotoWin $x={23} $y={-6} $w={1146} $h={798} $edge="#fff" $shadow="0 0 20px rgba(0,0,0,.7)">
          <TitleRow $h={29} $px={3} $gap={4} $size={13}><NetFolderTilted /><Caption>Systemsteuerung\Alle Systemsteuerungselemente\Netzwerkverbindungen</Caption></TitleRow>
          <NavRow $h={42}>
            <Arrows $w={124} $l={15} $r={8}><Back s={16} /><Forward s={16} /><Recent /><Up s={15} /></Arrows>
            <Address $h={38} $size={13} $open><NetFolderTilted /><Crumbs w={25} /></Address>
          </NavRow>
          <CommandBar $h={41} $size={13}><CaretButton $gap={6}>Organisieren <Caret /></CaretButton></CommandBar>
          <Connection>
            <ConnIcon><BluetoothPcs /></ConnIcon>
            <ConnText><ConnName>Bluetooth-Netzwerkverbindung</ConnName>Nicht verbunden<br />Bluetooth Device</ConnText>
          </Connection>
          <Win $x={466} $y={196} $w={470} $h={541} $edge="#b0b0b0" $shadow={soft} $bg="#f0f0f0">
            <DialogBody><BigFooter $gap={9} $pt={0} $size={13}><Push $main $w={86} $h={25}>OK</Push><Push $w={86} $h={25}>Abbrechen</Push></BigFooter></DialogBody>
          </Win>
          <Win $x={18} $y={196} $w={427} $h={550} $edge="#a0a0a0" $shadow={soft} $bg="#f0f0f0">
            <Properties metrics={large} title="Eigenschaften von WLAN" adapter="Intel(R) Wireless-AC" mark />
          </Win>
        </PhotoWin>
        <Shade />
        <FileName>1611403051012.png</FileName>

        <Win $x={157} $y={67} $w={1125} $h={634} $edge="#8c8c8c" $shadow="0 2px 14px rgba(0,0,0,.38)">
          <TitleRow $h={29} $px={8}>
            <NetFolder /><Caption>Netzwerkverbindungen</Caption>
            <CaptionButtons>
              <button aria-label="Minimieren"><Stroke w={11} h={11} d="M0 5.500h10" c="#888" sw={1} /></button>
              <button aria-label="Maximieren"><Stroke w={11} h={11} d="M.5.500h9v9h-9z" c="#888" sw={1} /></button>
              <button aria-label="Schließen"><Cross c="#888" /></button>
            </CaptionButtons>
          </TitleRow>
          <NavRow $h={41}>
            <Arrows $w={106} $l={13} $r={7}><Back /><Forward /><Recent /><Up /></Arrows>
            <Address $h={30} $size={11}>
              <NetFolder /><Crumbs w={23} />
              <AddressEnd>
                <IconCell $w={32} aria-label="Verlauf"><Stroke w={10} h={7} d="M1 1l4 4 4-4" c="#777" sw={1.800} /></IconCell>
                <IconCell $w={33} $line aria-label="Aktualisieren"><RefreshIcon /></IconCell>
              </AddressEnd>
            </Address>
            <Search><SearchInput aria-label="Suchen" /><LensIcon /></Search>
          </NavRow>
          <MenuRow>
            <Menus>{["Datei", "Bearbeiten", "Ansicht", "Erweitert", "Extras"].map((t) => <button key={t}>{t}</button>)}</Menus>
            <Tools>
              <button aria-label="Navigationsbereich"><PaneIcon /></button>
              <FolderButton $gap={10} aria-label="Ordneroptionen"><FolderOpts /><Caret c="#111" /></FolderButton>
              <ToolCell aria-label="Ausschneiden"><CutIcon /></ToolCell>
              <ToolCell aria-label="Kopieren"><CopyIcon /></ToolCell>
              <ToolCell aria-label="Einfügen"><PasteIcon /></ToolCell>
              <ToolCell aria-label="Löschen"><DeleteIcon /></ToolCell>
              <ToolCell aria-label="Eigenschaften"><TickIcon /></ToolCell>
              <ToolCell aria-label="Senden"><MailIcon /></ToolCell>
              <Divider />
              <button aria-label="Classic Shell"><ShellIcon /></button>
            </Tools>
          </MenuRow>
          <MainCommands $h={32}>
            <CaretButton>Organisieren <Caret /></CaretButton>
            <button>Netzwerkgerät deaktivieren</button>
            <button>Verbindung untersuchen</button>
            <button>Verbindung umbenennen</button>
            <button>Status der Verbindung anzeigen</button>
            <More aria-label="Weitere Befehle">»</More>
            <CommandEnd>
              <CaretButton $gap={11} aria-label="Ansicht ändern"><ViewIcon /><Caret /></CaretButton>
              <button aria-label="Vorschau"><PreviewIcon /></button>
              <button aria-label="Hilfe"><HelpIcon /></button>
            </CommandEnd>
          </MainCommands>
          <Files><SelectedTile><TilePc /></SelectedTile></Files>
          <Details><Count>1 Element ausgewählt</Count><DetailsIcon /><LargeIcon /></Details>
          <StatusBar>
            <StatusCell>Realtek PCIe GbE Family Controller</StatusCell>
            <StatusCell $w={88} />
            <StatusCell $w={200}><ComputerIcon />Computer<Grip><GripIcon /></Grip></StatusCell>
          </StatusBar>
        </Win>

        <Win $x={181} $y={156} $w={363} $h={468} $edge="#8c8c8c" $shadow="0 3px 14px rgba(0,0,0,.4)" $bg="#f0f0f0">
          <Properties metrics={small} title="Eigenschaften von Ethernet" adapter="Realtek PCIe GbE Family Controller" />
        </Win>

        <Win $x={215} $y={232} $w={400} $h={455} $edge="#555" $shadow="0 4px 18px rgba(0,0,0,.5)" $bg="#f0f0f0">
          <TitleRow $h={30} $px={9} $color="#000"><Caption>Eigenschaften von Internetprotokoll, Version 4 (TCP/IPv4)</Caption><button aria-label="Schließen"><Cross c="#000" /></button></TitleRow>
          <DialogBody>
            <Tabs $h={20}>
              <Tab $on $px={5} $h={21}>Allgemein</Tab>
              <Tab $px={3} $h={18}>Alternative Konfiguration</Tab>
            </Tabs>
            <Panel $pad="13px 11px 10px 14px">
              <Intro>{"IP-Einstellungen können automatisch zugewiesen werden, wenn das\nNetzwerk diese Funktion unterstützt. Wenden Sie sich andernfalls an den\nNetzwerkadministrator, um die geeigneten IP-Einstellungen zu beziehen."}</Intro>
              <SoloRadio $mt={18}><Radio name="ip" defaultChecked />IP-Adresse automatisch beziehen</SoloRadio>
              <IpGroup>
                <IpLegend $w={204}><RadioLabel><Radio name="ip" />Folgende IP-Adresse verwenden:</RadioLabel></IpLegend>
                <IpField label="IP-Adresse:" />
                <IpField label="Subnetzmaske:" />
                <IpField label="Standardgateway:" />
              </IpGroup>
              <SoloRadio $mt={6}><Radio name="dns" defaultChecked />DNS-Serveradresse automatisch beziehen</SoloRadio>
              <IpGroup>
                <IpLegend $w={252}><RadioLabel><Radio name="dns" />Folgende DNS-Serveradressen verwenden:</RadioLabel></IpLegend>
                <IpField label="Bevorzugter DNS-Server:" />
                <IpField label="Alternativer DNS-Server:" />
              </IpGroup>
              <Verify><Check disabled />Einstellungen beim Beenden überprüfen</Verify>
              <Advanced $w={88} $h={21}>Erweitert...</Advanced>
            </Panel>
            <TightFooter $gap={8} $pt={7}><Push $main $w={73} $h={21}>OK</Push><Push $w={73} $h={21}>Abbrechen</Push></TightFooter>
          </DialogBody>
        </Win>
      </Desktop>

      <Notice>
        <NoticeText>ComputerBase Forum hätte gerne deine Erlaubnis zum <NoticeLink href="#">Aktivieren von Push-Benachrichtigungen</NoticeLink>.</NoticeText>
        <NoticeClose aria-label="Schließen"><Cross c="#7b858c" s={10} w={2.500} /></NoticeClose>
      </Notice>
      <Taskbar>
        <Task $w={151} $l={6} $mr={9} $gap={5}><PrIcon />Adobe Premiere Pr...</Task>
        <Task $w={152} $l={7} $mr={5}><DesktopIcon />Desktop</Task>
        <Task $w={160} $l={10} $mr={0} $gap={5} $on><NetFolderTilted s={23} />Netzwerkverbindun...</Task>
        <Tray>
          <Stroke w={12} h={8} d="M1 7l5-5 5 5" c="#fff" sw={1.300} />
          <NetTray />
          <Speaker />
          <Clock>13:03<br />23.01.2021</Clock>
          <Bell aria-label="Info-Center"><BellIcon /></Bell>
          <Peek />
        </Tray>
      </Taskbar>
    </Screen>
  );
}
